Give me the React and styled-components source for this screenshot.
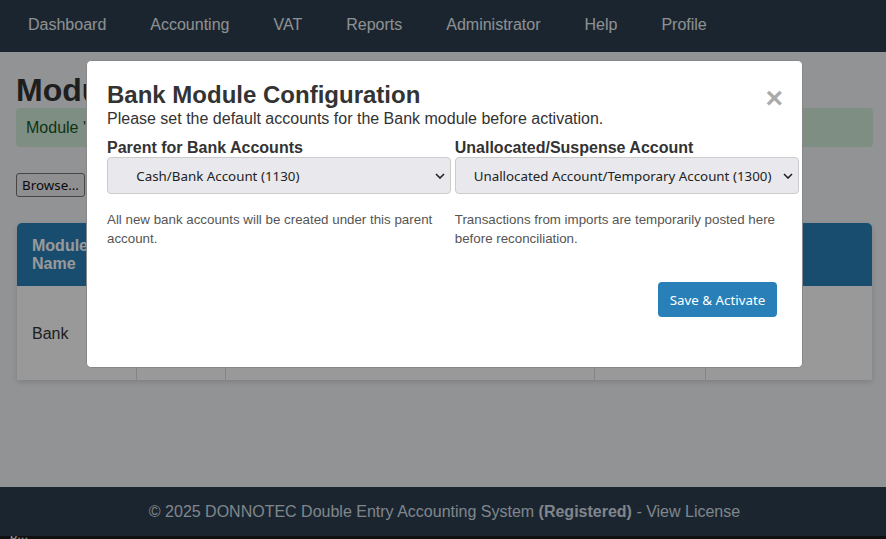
import React from "react";
import styled, { createGlobalStyle } from "styled-components";

const Global = createGlobalStyle`
  html, body { margin: 0; padding: 0; height: 100%; background: #f4f6f8; overflow: hidden; }
  body { font-family: "Liberation Sans", Arial, sans-serif; color: #333; font-size: 16px; }
  * { box-sizing: border-box; }
`;

const chevron =
  "data:image/svg+xml,%3Csvg xmlns='http://www.w3.org/2000/svg' width='10' height='6' viewBox='0 0 10 6'%3E%3Cpath d='M1 1l4 4 4-4' fill='none' stroke='%23222' stroke-width='1.6'/%3E%3C/svg%3E";

const Page = styled.div`
  height: 539px;
  display: flex;
  flex-direction: column;
`;
const TopBar = styled.nav`
  height: 52px;
  background: #2c3e50;
  display: flex;
  align-items: center;
  gap: 44px;
  padding: 0 28px 3px;
  flex: none;
`;
const NavLink = styled.a`
  color: #ecf0f1;
  font-size: 16px;
`;
const Main = styled.main`
  flex: 1;
  padding: 20px 13px 0 16px;
  min-height: 0;
`;
const Title = styled.h1`
  margin: 0;
  font-size: 32px;
  line-height: 36px;
  color: #333;
  font-weight: 700;
`;
const Alert = styled.div`
  height: 39px;
  background: #d4edda;
  color: #155724;
  border-radius: 4px;
  padding: 0 10px;
  display: flex;
  align-items: center;
  font-size: 16px;
`;
const FileRow = styled.div`
  margin-top: 26px;
  height: 24px;
`;
const Browse = styled.button`
  width: 69px;
  height: 24px;
  padding: 0;
  font: 13.33px "Noto Sans", sans-serif;
  background: #efeff3;
  border: 1px solid #767676;
  border-radius: 3px;
  color: #111;
`;
const Table = styled.table`
  margin: 26px 0 0 1px;
  width: 855px;
  border-collapse: separate;
  border-spacing: 0;
  background: #fff;
  table-layout: fixed;
  border-radius: 5px 5px 0 0;
  box-shadow: 0 2px 6px rgba(0, 0, 0, 0.15);
`;
const Head = styled.th`
  height: 63px;
  background: #2980b9;
  color: #fff;
  font-size: 16px;
  line-height: 18px;
  text-align: left;
  padding: 0 15px;
  &:first-child { border-top-left-radius: 5px; }
  &:last-child { border-top-right-radius: 5px; }
`;
const Cell = styled.td`
  height: 94px;
  padding: 2px 15px 0;
  font-size: 16px;
  border-left: ${(p) => (p.$first ? "none" : "1px solid #ddd")};
`;
const Footer = styled.footer`
  height: 49px;
  flex: none;
  background: #2c3e50;
  color: #d6dfe4;
  display: flex;
  align-items: center;
  justify-content: center;
  font-size: 16px;
  padding-left: 3px;
`;
const Strip = styled.div`
  height: 3px;
  flex: none;
  background: #1c1c1c;
  color: #fff;
  font-size: 13px;
  line-height: 0;
  padding-left: 10px;
  overflow: hidden;
`;
const StripText = styled.span`
  display: block;
  margin-top: -1px;
`;
const Overlay = styled.div`
  position: fixed;
  inset: 0;
  background: rgba(0, 0, 0, 0.4);
`;
const Modal = styled.div`
  position: absolute;
  left: 86px;
  top: 60px;
  width: 717px;
  height: 308px;
  background: #fff;
  border: 1px solid #888;
  border-radius: 5px;
  padding: 20px;
  color: #333;
`;
const Close = styled.span`
  position: absolute;
  right: 19px;
  top: 21px;
  font-size: 30px;
  line-height: 32px;
  font-weight: 700;
  color: #aaa;
`;
const ModalTitle = styled.h2`
  margin: 0 0 1px;
  font-size: 24px;
  line-height: 28px;
`;
const Lead = styled.p`
  margin: 0 0 11px;
  font-size: 16px;
  line-height: 18px;
`;
const Fields = styled.div`
  display: grid;
  grid-template-columns: 344px 344px;
  column-gap: 3.75px;
`;
const Field = styled.div`
  display: flex;
  flex-direction: column;
`;
const Label = styled.label`
  font-weight: 700;
  font-size: 16px;
  line-height: 18px;
`;
const Select = styled.select`
  appearance: none;
  width: 100%;
  height: 37px;
  padding: 0 24px 0 11px;
  border: 1px solid #ccc;
  border-radius: 4px;
  background: #e9e9ed url("${chevron}") no-repeat right 5px center;
  color: #222;
  font: 13.33px "Noto Sans", sans-serif;
`;
const Help = styled.small`
  margin-top: 16px;
  font-size: 13.33px;
  line-height: 19px;
  color: #555;
  max-width: 330px;
`;
const Actions = styled.div`
  display: flex;
  justify-content: flex-end;
  margin: 34px 5px 0 0;
`;
const Primary = styled.button`
  width: 119px;
  height: 35px;
  padding: 0;
  background: #2980b9;
  color: #fff;
  border: none;
  border-radius: 4px;
  font: 13.33px "Noto Sans", sans-serif;
`;

const N = "\u00a0";

export default function App() {
  return (
    <>
      <Global />
      <Page>
        <TopBar>
          {["Dashboard", "Accounting", "VAT", "Reports", "Administrator", "Help", "Profile"].map((t) => (
            <NavLink key={t}>{t}</NavLink>
          ))}
        </TopBar>
        <Main>
          <Title>Modules</Title>
          <Alert>Module 'Bank' updated.</Alert>
          <FileRow>
            <Browse>Browse...</Browse>
          </FileRow>
          <Table>
            <colgroup>
              <col style={{ width: 119 }} />
              <col style={{ width: 89 }} />
              <col style={{ width: 369 }} />
              <col style={{ width: 111 }} />
              <col />
            </colgroup>
            <thead>
              <tr>
                <Head>Module Name</Head>
                <Head>Version</Head>
                <Head>Description</Head>
                <Head>Status</Head>
                <Head />
              </tr>
            </thead>
            <tbody>
              <tr>
                <Cell $first>Bank</Cell>
                <Cell>1.0</Cell>
                <Cell>Bank module</Cell>
                <Cell>Inactive</Cell>
                <Cell />
              </tr>
            </tbody>
          </Table>
        </Main>
        <Footer>
          <span>
            © 2025 DONNOTEC Double Entry Accounting System <strong>(Registered)</strong> - View License
          </span>
        </Footer>
        <Strip>
          <StripText>p...</StripText>
        </Strip>
      </Page>
      <Overlay>
        <Modal>
          <Close>×</Close>
          <ModalTitle>Bank Module Configuration</ModalTitle>
          <Lead>Please set the default accounts for the Bank module before activation.</Lead>
          <Fields>
            <Field>
              <Label>Parent for Bank Accounts</Label>
              <Select defaultValue="1130">
                <option value="1130">{N + N + N + N + N + "Cash/Bank Account (1130)"}</option>
              </Select>
              <Help>All new bank accounts will be created under this parent account.</Help>
            </Field>
            <Field>
              <Label>Unallocated/Suspense Account</Label>
              <Select defaultValue="1300">
                <option value="1300">{N + N + "Unallocated Account/Temporary Account (1300)"}</option>
              </Select>
              <Help>Transactions from imports are temporarily posted here before reconciliation.</Help>
            </Field>
          </Fields>
          <Actions>
            <Primary>Save &amp; Activate</Primary>
          </Actions>
        </Modal>
      </Overlay>
    </>
  );
}
